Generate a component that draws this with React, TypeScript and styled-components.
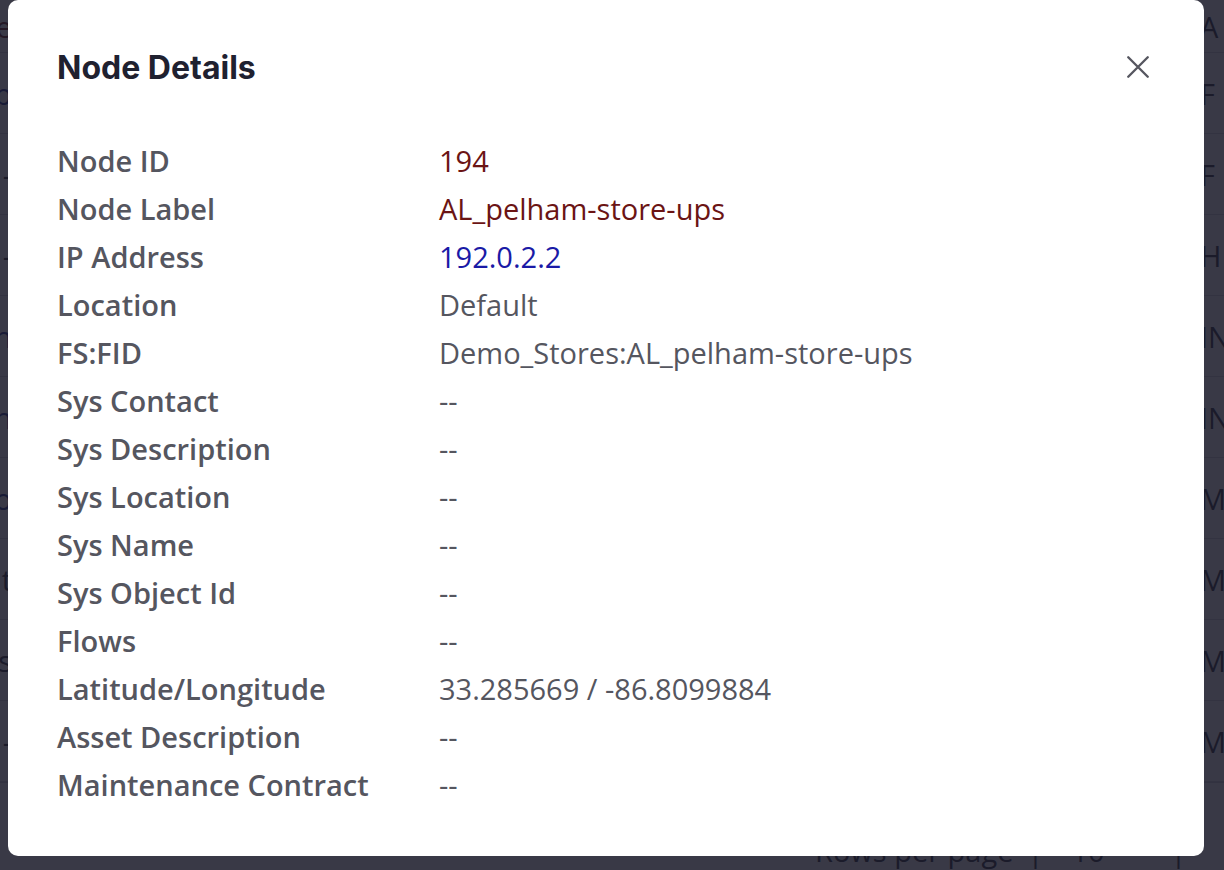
import React from "react";
import styled, { createGlobalStyle } from "styled-components";

const Global = createGlobalStyle`
  html, body { margin: 0; padding: 0; }
  body {
    width: 1224px;
    height: 870px;
    overflow: hidden;
    background: #ffffff;
    font-family: "Open Sans", "Liberation Sans", sans-serif;
  }
`;

const Page = styled.div`
  width: 1224px;
  height: 870px;
  display: flex;
  flex-direction: column;
  background: #ffffff;
  overflow: hidden;
`;

const Table = styled.div`
  display: flex;
  flex-direction: column;
  margin-left: -60px;
  width: 1340px;
`;

const TRow = styled.div<{ $head?: boolean }>`
  display: grid;
  grid-template-columns: 72px 1fr 80px;
  align-items: center;
  height: ${(p) => (p.$head ? "52px" : "80px")};
  border-bottom: 1px solid #d0d2da;
  font-size: 29px;
  color: #2b2d3a;
`;

const Cell = styled.div<{ $tone?: "link" | "red" | "plain" }>`
  white-space: nowrap;
  overflow: hidden;
  color: ${(p) =>
    p.$tone === "link" ? "#1b2a8c" : p.$tone === "red" ? "#6a1b1b" : "#2b2d3a"};
  text-align: ${(p) => (p.$tone === undefined ? "left" : "right")};
`;

const Scrollbar = styled.div`
  height: 14px;
  background: #c9cbd3;
`;

const Footer = styled.div`
  display: flex;
  align-items: center;
  margin-top: 48px;
  padding-left: 815px;
  height: 40px;
  font-size: 29px;
  color: #2b2d3a;
`;

const FooterSep = styled.span<{ $left: number }>`
  margin-left: ${(p) => p.$left}px;
`;

const PerPage = styled.div`
  display: flex;
  align-items: center;
  gap: 24px;
  margin-left: 28px;
`;

const Overlay = styled.div`
  position: fixed;
  inset: 0;
  background: rgba(24, 25, 40, 0.86);
`;

const Modal = styled.div`
  position: fixed;
  left: 8px;
  top: 0;
  width: 1196px;
  height: 856px;
  background: #ffffff;
  border-radius: 10px;
  box-sizing: border-box;
  padding: 45px 49px 0 49px;
  display: flex;
  flex-direction: column;
`;

const Header = styled.div`
  display: flex;
  align-items: center;
  justify-content: space-between;
  height: 46px;
`;

const Title = styled.h2`
  margin: 0;
  font-family: Inter, "Liberation Sans", sans-serif;
  font-weight: 700;
  font-size: 32px;
  line-height: 1;
  color: #1f2130;
`;

const CloseButton = styled.button`
  border: none;
  background: transparent;
  padding: 0;
  margin-right: 2px;
  margin-top: -2px;
  width: 30px;
  height: 30px;
  display: flex;
  align-items: center;
  justify-content: center;
  color: #55565f;
  cursor: pointer;
`;

const List = styled.dl`
  margin: 45px 0 0 0;
  display: grid;
  grid-template-columns: 382px 1fr;
  grid-auto-rows: 48px;
  align-items: center;
`;

const Label = styled.dt`
  font-weight: 600;
  font-size: 29px;
  color: #55565f;
  white-space: nowrap;
`;

const Value = styled.dd<{ $tone?: "red" | "blue" }>`
  margin: 0;
  font-size: 29px;
  font-weight: 400;
  white-space: nowrap;
  color: ${(p) =>
    p.$tone === "red" ? "#6b1414" : p.$tone === "blue" ? "#1a1aa6" : "#55565f"};
`;

const bgRows: { left: string; lt?: "link" | "red" | "plain"; right: string }[] = [
  { left: "p", lt: "link", right: "F" },
  { left: "-", lt: "plain", right: "F" },
  { left: "-", lt: "plain", right: "H" },
  { left: "h", lt: "link", right: "IN" },
  { left: "h", lt: "link", right: "IN" },
  { left: "o", lt: "link", right: "M" },
  { left: "t", lt: "plain", right: "M" },
  { left: "s", lt: "plain", right: "M" },
  { left: "-", lt: "plain", right: "M" },
];

const details: { label: string; value: string; tone?: "red" | "blue" }[] = [
  { label: "Node ID", value: "194", tone: "red" },
  { label: "Node Label", value: "AL_pelham-store-ups", tone: "red" },
  { label: "IP Address", value: "192.0.2.2", tone: "blue" },
  { label: "Location", value: "Default" },
  { label: "FS:FID", value: "Demo_Stores:AL_pelham-store-ups" },
  { label: "Sys Contact", value: "--" },
  { label: "Sys Description", value: "--" },
  { label: "Sys Location", value: "--" },
  { label: "Sys Name", value: "--" },
  { label: "Sys Object Id", value: "--" },
  { label: "Flows", value: "--" },
  { label: "Latitude/Longitude", value: "33.285669 / -86.8099884" },
  { label: "Asset Description", value: "--" },
  { label: "Maintenance Contract", value: "--" },
];

export default function App() {
  return (
    <>
      <Global />
      <Page>
        <Table>
          <TRow $head>
            <Cell $tone="red">e</Cell>
            <Cell />
            <Cell>A</Cell>
          </TRow>
          {bgRows.map((r, i) => (
            <TRow key={i}>
              <Cell $tone={r.lt}>{r.left}</Cell>
              <Cell />
              <Cell>{r.right}</Cell>
            </TRow>
          ))}
        </Table>
        <Scrollbar />
        <Footer>
          <span>Rows per page</span>
          <FooterSep $left={14}>|</FooterSep>
          <PerPage>
            <span>10</span>
            <svg width="18" height="12" viewBox="0 0 18 12" fill="none">
              <path d="M2 2 L9 9 L16 2" stroke="currentColor" strokeWidth="2.6" />
            </svg>
          </PerPage>
          <FooterSep $left={24}>|</FooterSep>
        </Footer>
      </Page>
      <Overlay />
      <Modal role="dialog" aria-labelledby="node-details-title">
        <Header>
          <Title id="node-details-title">Node Details</Title>
          <CloseButton aria-label="Close">
            <svg width="26" height="26" viewBox="0 0 24 24" fill="none">
              <path
                d="M3 3 L21 21 M21 3 L3 21"
                stroke="currentColor"
                strokeWidth="2.2"
                strokeLinecap="round"
              />
            </svg>
          </CloseButton>
        </Header>
        <List>
          {details.map((d) => (
            <React.Fragment key={d.label}>
              <Label>{d.label}</Label>
              <Value $tone={d.tone}>{d.value}</Value>
            </React.Fragment>
          ))}
        </List>
      </Modal>
    </>
  );
}
